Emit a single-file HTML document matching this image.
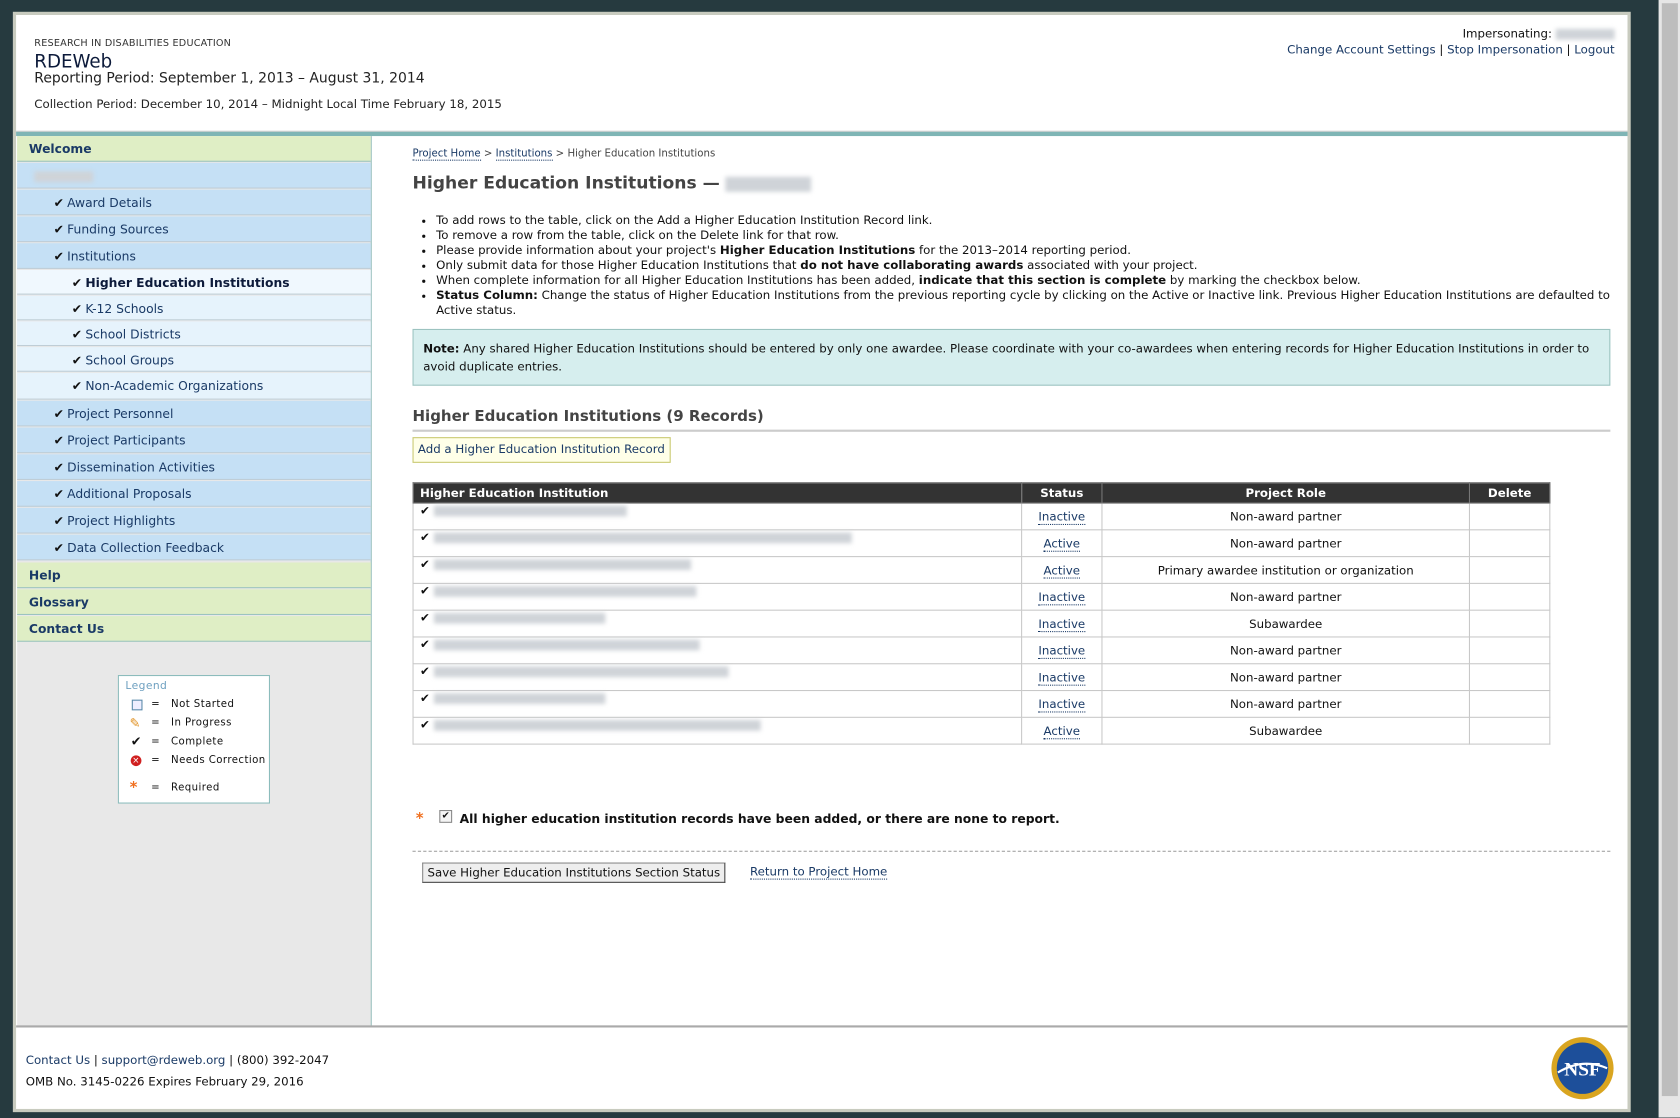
<!DOCTYPE html>
<html><head><meta charset="utf-8">
<style>
html,body{margin:0;padding:0;width:1680px;height:1117px;overflow:hidden;background:#263a3f;}
#s{position:absolute;left:0;top:0;width:1568px;height:1043px;transform:scale(1.07143);transform-origin:0 0;font-family:"DejaVu Sans","Liberation Sans",sans-serif;font-size:11px;color:#111;}
.a{position:absolute;}
.blur{display:inline-block;background:#cfd3d8;filter:blur(2px);height:10px;vertical-align:middle;}
a{color:#1a3a66;text-decoration:none;}
.nav div{position:absolute;left:0;width:330px;height:24px;border-bottom:1px solid #bfcdd6;line-height:24px;font-size:11.5px;color:#1a3a66;}
.g{background:#dfeec5;font-weight:bold;padding-left:11px;box-sizing:border-box;border-bottom:1px solid #9cc3c0!important;}
.b{background:#c5e0f5;padding-left:34px;box-sizing:border-box;}
.c{background:#e6f3fc;padding-left:51px;box-sizing:border-box;}
.k{font-weight:bold;color:#111;margin-right:3px;}
table{border-collapse:collapse;}
td,th{border:1px solid #c8c8c8;height:24px;padding:0 6px;font-size:11px;}
th{background:#333;color:#fff;height:18px;text-align:center;border-color:#777;}
.st{text-align:center;} .st a{border-bottom:1px dotted #1a3a66;}
ul{margin:0;padding:0 0 0 22px;}
li{line-height:14px;}
</style></head><body>
<div id="s">
<!-- scrollbar -->
<div class="a" style="left:1548px;top:0;width:20px;height:1043px;background:#e6e6e6"></div>
<div class="a" style="left:1551px;top:3px;width:15px;height:1020px;background:#bdbdbd"></div>
<!-- frame -->
<div class="a" style="left:12px;top:11px;width:1510px;height:1027px;background:#c8cbbf"></div>
<div class="a" style="left:15px;top:14px;width:1504px;height:1021px;background:#fff"></div>
<!-- header -->
<div class="a" style="left:32px;top:36px;font-size:9px;color:#333;letter-spacing:.2px">RESEARCH IN DISABILITIES EDUCATION</div>
<div class="a" style="left:32px;top:48px;font-size:17px;color:#0c1a3a">RDEWeb</div>
<div class="a" style="left:32px;top:66px;font-size:13px;color:#222">Reporting Period: September 1, 2013 – August 31, 2014</div>
<div class="a" style="left:32px;top:91px;font-size:11px;color:#222">Collection Period: December 10, 2014 – Midnight Local Time February 18, 2015</div>
<div class="a" style="right:61px;top:24px;font-size:11px;text-align:right;line-height:15px">Impersonating: <span class="blur" style="width:55px"></span><br><a href="#">Change Account Settings</a> | <a href="#">Stop Impersonation</a> | <a href="#">Logout</a></div>
<div class="a" style="left:15px;top:122px;width:1504px;height:1px;background:#ccc"></div>
<div class="a" style="left:15px;top:123px;width:1504px;height:4px;background:#7fb5b5"></div>
<!-- sidebar -->
<div class="a" style="left:16px;top:127px;width:330px;height:831px;background:#e8e8e8;border-right:1px solid #9cc3c0"></div>
<div class="a nav" style="left:16px;top:127px">
<div class="g" style="top:0">Welcome</div>
<div class="b" style="top:25px;padding-left:16px"><span class="blur" style="width:55px"></span></div>
<div class="b" style="top:50px"><span class="k">✔</span>Award Details</div>
<div class="b" style="top:75px"><span class="k">✔</span>Funding Sources</div>
<div class="b" style="top:100px"><span class="k">✔</span>Institutions</div>
<div class="c" style="top:125px;background:#f0f8fe;font-weight:bold;color:#0c1a3a;height:23px"><span class="k">✔</span>Higher Education Institutions</div>
<div class="c" style="top:149px;height:23px"><span class="k">✔</span>K-12 Schools</div>
<div class="c" style="top:173px;height:23px"><span class="k">✔</span>School Districts</div>
<div class="c" style="top:197px;height:23px"><span class="k">✔</span>School Groups</div>
<div class="c" style="top:221px;height:25px"><span class="k">✔</span>Non-Academic Organizations</div>
<div class="b" style="top:247px"><span class="k">✔</span>Project Personnel</div>
<div class="b" style="top:272px"><span class="k">✔</span>Project Participants</div>
<div class="b" style="top:297px"><span class="k">✔</span>Dissemination Activities</div>
<div class="b" style="top:322px"><span class="k">✔</span>Additional Proposals</div>
<div class="b" style="top:347px"><span class="k">✔</span>Project Highlights</div>
<div class="b" style="top:372px"><span class="k">✔</span>Data Collection Feedback</div>
<div class="g" style="top:398px">Help</div>
<div class="g" style="top:423px">Glossary</div>
<div class="g" style="top:448px">Contact Us</div>
</div>
<!-- legend -->
<div class="a" style="left:110px;top:630px;width:140px;height:118px;background:#fff;border:1px solid #8cbcbc;font-size:9.5px;letter-spacing:.4px">
<div class="a" style="left:6px;top:4px;color:#6ea0c0;font-size:10px">Legend</div>
<div class="a" style="left:12px;top:22px;width:8px;height:8px;border:1px solid #5a8aaa;background:#eef"></div><div class="a" style="left:30px;top:21px">=&nbsp;&nbsp; Not Started</div>
<div class="a" style="left:10px;top:37px;color:#e09020;font-size:12px">✎</div><div class="a" style="left:30px;top:38px">=&nbsp;&nbsp; In Progress</div>
<div class="a" style="left:11px;top:54px;font-weight:bold;font-size:12px">✔</div><div class="a" style="left:30px;top:56px">=&nbsp;&nbsp; Complete</div>
<div class="a" style="left:11px;top:74px;width:10px;height:10px;border-radius:50%;background:#d02020;color:#fff;font-size:8px;line-height:10px;text-align:center">×</div><div class="a" style="left:30px;top:73px">=&nbsp;&nbsp; Needs Correction</div>
<div class="a" style="left:10px;top:96px;color:#f07020;font-size:14px;font-weight:bold">*</div><div class="a" style="left:30px;top:99px">=&nbsp;&nbsp; Required</div>
</div>
<!-- content -->
<div class="a" style="left:385px;top:138px;font-size:9.5px;color:#444"><a href="#" style="border-bottom:1px dotted #1a3a66">Project Home</a> &gt; <a href="#" style="border-bottom:1px dotted #1a3a66">Institutions</a> &gt; Higher Education Institutions</div>
<div class="a" style="left:385px;top:161px;font-size:16px;font-weight:bold;color:#444">Higher Education Institutions — <span class="blur" style="width:80px;height:14px"></span></div>
<div class="a" style="left:385px;top:199px;width:1120px;font-size:11px">
<ul>
<li>To add rows to the table, click on the Add a Higher Education Institution Record link.</li>
<li>To remove a row from the table, click on the Delete link for that row.</li>
<li>Please provide information about your project's <b>Higher Education Institutions</b> for the 2013–2014 reporting period.</li>
<li>Only submit data for those Higher Education Institutions that <b>do not have collaborating awards</b> associated with your project.</li>
<li>When complete information for all Higher Education Institutions has been added, <b>indicate that this section is complete</b> by marking the checkbox below.</li>
<li><b>Status Column:</b> Change the status of Higher Education Institutions from the previous reporting cycle by clicking on the Active or Inactive link. Previous Higher Education Institutions are defaulted to Active status.</li>
</ul></div>
<div class="a" style="left:385px;top:307px;width:1098px;height:42px;padding:9px 9px 0;background:#d6eeee;border:1px solid #9cc3c0;line-height:17px;font-size:11px"><b>Note:</b> Any shared Higher Education Institutions should be entered by only one awardee. Please coordinate with your co-awardees when entering records for Higher Education Institutions in order to avoid duplicate entries.</div>
<div class="a" style="left:385px;top:381px;width:1118px;height:20px;border-bottom:2px solid #ccc;font-size:14px;font-weight:bold;color:#444">Higher Education Institutions (9 Records)</div>
<div class="a" style="left:385px;top:408px;height:22px;padding:0 4px;line-height:22px;background:#ffffe8;border:1px solid #c8c870;font-size:11px;color:#1a3a66">Add a Higher Education Institution Record</div>
<table class="a" style="left:385px;top:450px;width:1062px">
<tr><th style="text-align:left;width:555px">Higher Education Institution</th><th style="width:62px">Status</th><th style="width:330px">Project Role</th><th>Delete</th></tr>
<tr><td style="vertical-align:top"><b>✔</b> <span class="blur" style="width:180px"></span></td><td class="st"><a href="#">Inactive</a></td><td class="st">Non-award partner</td><td></td></tr>
<tr><td style="vertical-align:top"><b>✔</b> <span class="blur" style="width:390px"></span></td><td class="st"><a href="#">Active</a></td><td class="st">Non-award partner</td><td></td></tr>
<tr><td style="vertical-align:top"><b>✔</b> <span class="blur" style="width:240px"></span></td><td class="st"><a href="#">Active</a></td><td class="st">Primary awardee institution or organization</td><td></td></tr>
<tr><td style="vertical-align:top"><b>✔</b> <span class="blur" style="width:245px"></span></td><td class="st"><a href="#">Inactive</a></td><td class="st">Non-award partner</td><td></td></tr>
<tr><td style="vertical-align:top"><b>✔</b> <span class="blur" style="width:160px"></span></td><td class="st"><a href="#">Inactive</a></td><td class="st">Subawardee</td><td></td></tr>
<tr><td style="vertical-align:top"><b>✔</b> <span class="blur" style="width:248px"></span></td><td class="st"><a href="#">Inactive</a></td><td class="st">Non-award partner</td><td></td></tr>
<tr><td style="vertical-align:top"><b>✔</b> <span class="blur" style="width:275px"></span></td><td class="st"><a href="#">Inactive</a></td><td class="st">Non-award partner</td><td></td></tr>
<tr><td style="vertical-align:top"><b>✔</b> <span class="blur" style="width:160px"></span></td><td class="st"><a href="#">Inactive</a></td><td class="st">Non-award partner</td><td></td></tr>
<tr><td style="vertical-align:top"><b>✔</b> <span class="blur" style="width:305px"></span></td><td class="st"><a href="#">Active</a></td><td class="st">Subawardee</td><td></td></tr>
</table>
<div class="a" style="left:388px;top:756px;color:#f07020;font-size:14px;font-weight:bold">*</div>
<div class="a" style="left:410px;top:756px;width:10px;height:10px;border:1px solid #888;background:#f4f4f4;font-size:9px;line-height:10px;text-align:center">✔</div>
<div class="a" style="left:429px;top:757px;font-size:11.5px;font-weight:bold">All higher education institution records have been added, or there are none to report.</div>
<div class="a" style="left:385px;top:794px;width:1118px;border-top:1px dashed #999"></div>
<div class="a" style="left:394px;top:805px;height:17px;padding:0 4px;line-height:17px;background:#eee;border:1px solid #888;border-right-color:#444;border-bottom-color:#444;font-size:11px">Save Higher Education Institutions Section Status</div>
<div class="a" style="left:700px;top:807px;font-size:11px"><a href="#" style="border-bottom:1px dotted #1a3a66">Return to Project Home</a></div>
<!-- footer -->
<div class="a" style="left:15px;top:957px;width:1504px;height:2px;background:#aaa"></div>
<div class="a" style="left:24px;top:980px;font-size:11px;line-height:20px"><a href="#">Contact Us</a> | <a href="#">support@rdeweb.org</a> | (800) 392-2047<br>OMB No. 3145-0226 Expires February 29, 2016</div>
<svg class="a" style="left:1446px;top:967px" width="62" height="60" viewBox="0 0 62 60">
<circle cx="31" cy="30" r="29" fill="#d9a520"/>
<circle cx="31" cy="30" r="24" fill="#1d4f9a"/>
<path d="M8 34 Q31 20 54 30" stroke="#fff" stroke-width="2" fill="none"/>
<text x="31" y="37" font-family="Liberation Serif,serif" font-size="18" font-weight="bold" fill="#fff" text-anchor="middle">NSF</text>
</svg>
</div>
</body></html>
